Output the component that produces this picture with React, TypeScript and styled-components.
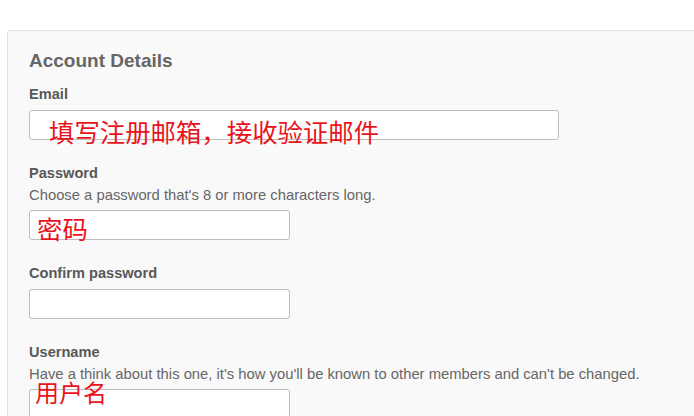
import styled, { createGlobalStyle } from 'styled-components';

const GlobalStyle = createGlobalStyle`
  html, body {
    margin: 0;
    padding: 0;
    background: #fff;
    overflow: hidden;
  }
  body {
    font-family: 'Liberation Sans', Arial, sans-serif;
  }
`;

type Note = { text: string; x: number; y: number; size: number };

type Field = {
  label: string;
  hint?: string;
  wide?: boolean;
  note?: Note;
};

const fields: Field[] = [
  {
    label: 'Email',
    wide: true,
    note: { text: '填写注册邮箱，接收验证邮件', x: 20, y: 9, size: 25.4 },
  },
  {
    label: 'Password',
    hint: "Choose a password that's 8 or more characters long.",
    note: { text: '密码', x: 8, y: 6, size: 25.4 },
  },
  { label: 'Confirm password' },
  {
    label: 'Username',
    hint: "Have a think about this one, it's how you'll be known to other members and can't be changed.",
    note: { text: '用户名', x: 6, y: -9, size: 24 },
  },
];

const App = () => (
  <>
    <GlobalStyle />
    <Page>
      <Panel>
        <Heading>Account Details</Heading>
        {fields.map((f) => (
          <FieldBlock key={f.label}>
            <Label>{f.label}</Label>
            {f.hint && <Hint>{f.hint}</Hint>}
            <InputWrap wide={f.wide}>
              <Input type='text' />
              {f.note && (
                <Annotation style={{ left: f.note.x, top: f.note.y, fontSize: f.note.size }}>
                  {f.note.text}
                </Annotation>
              )}
            </InputWrap>
          </FieldBlock>
        ))}
      </Panel>
    </Page>
  </>
);

export default App;

const Page = styled.div`
  padding: 30px 0 0 7px;
  width: 760px;
`;

const Panel = styled.section`
  background: #f9f9f9;
  border: 1px solid #e2e2e2;
  border-radius: 3px;
  padding: 19px 21px 40px;
  display: flex;
  flex-direction: column;
  gap: 25px;
`;

const Heading = styled.h2`
  margin: 0 0 -11px;
  font-size: 19px;
  line-height: 22px;
  font-weight: bold;
  color: #666;
`;

const FieldBlock = styled.div`
  display: flex;
  flex-direction: column;
`;

const Label = styled.label`
  font-size: 14.6px;
  line-height: 17px;
  font-weight: bold;
  color: #585858;
  margin-bottom: 7px;
`;

const Hint = styled.p`
  margin: -3px 0 6px;
  font-size: 14.8px;
  line-height: 18px;
  color: #666;
`;

const InputWrap = styled.div<{ wide?: boolean }>`
  position: relative;
  width: ${({ wide }) => (wide ? '530px' : '261px')};
`;

const Input = styled.input`
  display: block;
  box-sizing: border-box;
  width: 100%;
  height: 30px;
  margin: 0;
  border: 1px solid #bdbdbd;
  border-radius: 3px;
  background: #fff;
  padding: 4px 8px;
`;

const Annotation = styled.span`
  position: absolute;
  white-space: nowrap;
  line-height: 1;
  color: #e8141c;
  font-family: 'Noto Sans CJK SC', sans-serif;
  pointer-events: none;
`;
